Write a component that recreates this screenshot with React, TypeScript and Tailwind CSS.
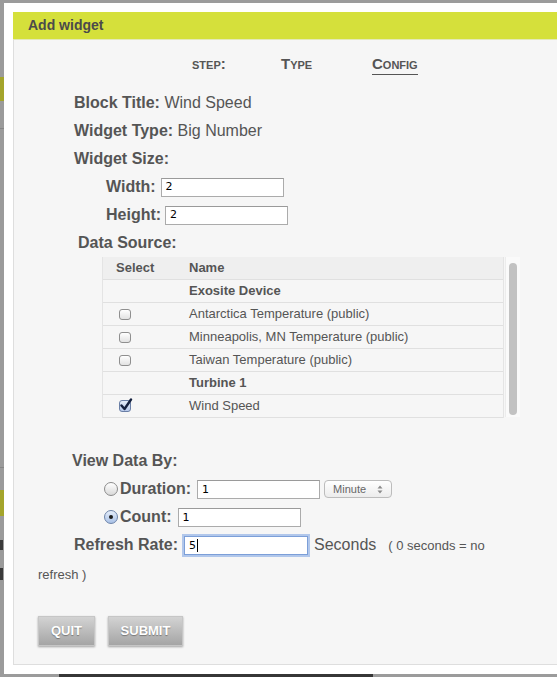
import React from 'react';

// Add-widget modal, config step

function Field({ w, value, focus }: { w: string; value: string; focus?: boolean }) {
  return (
    <div
      className={`${w} inline-flex items-center align-middle bg-white pl-[4px] font-['DejaVu_Sans',sans-serif] text-[11px] text-black ${
        focus
          ? 'h-[19px] border border-[#7c9fd8] shadow-[0_0_0_2px_rgba(120,160,225,0.55)]'
          : 'h-[19px] border border-[#ababab] border-t-[#9a9a9a]'
      }`}
    >
      {value}
      {focus && <span className="ml-px w-px h-[13px] bg-black" />}
    </div>
  );
}

function Check({ on }: { on?: boolean }) {
  if (on) {
    return (
      <span className="relative block w-[12px] h-[12px] rounded-[3px] border border-[#6a7fa6] bg-gradient-to-b from-[#e4ecf9] to-[#b7c9ea]">
        <svg viewBox="0 0 14 14" className="absolute -left-[1px] -top-[3px] w-[14px] h-[14px]">
          <path d="M2.5 7.5 L5.5 11 L12 1.5" fill="none" stroke="#15213f" strokeWidth="2.4" strokeLinecap="round" strokeLinejoin="round" />
        </svg>
      </span>
    );
  }
  return <span className="block w-[12px] h-[11px] rounded-[3px] border border-[#8f8f8f] bg-gradient-to-b from-white to-[#e2e2e2]" />;
}

function Radio({ on }: { on?: boolean }) {
  if (on) {
    return (
      <span className="flex items-center justify-center w-[14px] h-[14px] rounded-full border border-[#6d84a9] bg-gradient-to-b from-[#e6eefa] to-[#a9c1e6]">
        <span className="w-[4px] h-[4px] rounded-full bg-[#1c1c1c]" />
      </span>
    );
  }
  return <span className="block w-[14px] h-[14px] rounded-full border border-[#8c8c8c] bg-gradient-to-b from-white to-[#d9d9d9]" />;
}

const sources = [
  { group: 'Exosite Device' },
  { name: 'Antarctica Temperature (public)' },
  { name: 'Minneapolis, MN Temperature (public)' },
  { name: 'Taiwan Temperature (public)' },
  { group: 'Turbine 1' },
  { name: 'Wind Speed', on: true },
];

function Button({ children, w }: { children: React.ReactNode; w: string }) {
  return (
    <div
      className={`${w} h-[30px] flex items-center justify-center border border-[#c6c6c6] bg-gradient-to-b from-[#d3d3d3] to-[#a5a5a5] shadow-[0_1px_2px_rgba(0,0,0,0.35)] text-white font-bold text-[13px] [text-shadow:0_1px_1px_rgba(0,0,0,0.35)]`}
    >
      {children}
    </div>
  );
}

export default function App() {
  return (
    <div className="relative w-[557px] h-[677px] overflow-hidden bg-[#9b9b9b] font-['Liberation_Sans',Arial,sans-serif] text-[#555]">
      {/* page showing behind the modal */}
      <div className="absolute left-0 top-[77px] w-[4px] h-[24px] bg-[#a4a52c]" />
      <div className="absolute left-0 top-[128px] w-[4px] h-px bg-[#868686]" />
      <div className="absolute left-0 top-[467px] w-[4px] h-px bg-[#868686]" />
      <div className="absolute left-0 top-[490px] w-[4px] h-[26px] bg-[#a4a52c]" />
      <div className="absolute left-0 top-[540px] w-[3px] h-[10px] bg-[#3a3a3a]" />
      <div className="absolute left-0 top-[568px] w-[3px] h-[12px] bg-[#3a3a3a]" />
      <div className="absolute left-[59px] top-[674px] w-[314px] h-[3px] bg-[#363636]" />

      {/* modal */}
      <div className="absolute left-[4px] top-[3px] w-[580px] h-[671px] bg-white p-[9px]">
        <div className="h-[28px] flex items-center pl-[15px] bg-[#d5e03b] border-b border-[#e4e9b8] text-[14px] font-bold text-[#4b4b4b]">
          Add widget
        </div>

        <div className="h-[625px] bg-[#f6f6f6] border border-t-0 border-[#dedede] pt-[14px]">
          {/* steps */}
          <div className="flex pl-[178px] h-[21px] font-bold text-[15px] [font-variant:small-caps] leading-[20px]">
            <span className="w-[89px]">step:</span>
            <span className="w-[91px]">Type</span>
            <span className="border-b border-[#555]">Config</span>
          </div>

          <div className="mt-[14px] text-[16px]">
            <div className="h-[28px] flex items-center pl-[60px]">
              <b>Block Title:</b>&nbsp;Wind Speed
            </div>
            <div className="h-[28px] flex items-center pl-[60px]">
              <b>Widget Type:</b>&nbsp;Big Number
            </div>
            <div className="h-[28px] flex items-center pl-[60px]">
              <b>Widget Size:</b>
            </div>
            <div className="h-[28px] flex items-center pl-[92px] gap-[5px]">
              <b>Width:</b>
              <Field w="w-[123px]" value="2" />
            </div>
            <div className="h-[28px] flex items-center pl-[92px] gap-[4px]">
              <b>Height:</b>
              <Field w="w-[123px]" value="2" />
            </div>
            <div className="h-[28px] flex items-center pl-[64px]">
              <b>Data Source:</b>
            </div>
          </div>

          {/* data source table */}
          <div className="ml-[88px] w-[418px] h-[161px] flex text-[13px]">
            <div className="w-[402px] border-x border-[#e4e4e4]">
              <div className="h-[23px] flex items-center bg-[#efefef] border-b border-[#e0e0e0] font-bold">
                <span className="w-[86px] pl-[13px]">Select</span>
                <span>Name</span>
              </div>
              {sources.map((s, i) => (
                <div key={i} className="h-[23px] flex items-center border-b border-[#e0e0e0]">
                  <span className="w-[86px] pl-[16px]">{s.name && <Check on={s.on} />}</span>
                  {s.group ? <b>{s.group}</b> : <span>{s.name}</span>}
                </div>
              ))}
            </div>
            <div className="ml-px w-[15px] h-[160px] bg-[#fafafa] border-l border-[#ececec] pt-[6px] pl-[3px]">
              <div className="w-[8px] h-[152px] rounded-full bg-[#c2c2c2]" />
            </div>
          </div>

          <div className="mt-[29px] text-[16px]">
            <div className="h-[28px] flex items-center pl-[58px] font-bold">View Data By:</div>
            <div className="h-[28px] flex items-center pl-[90px]">
              <Radio />
              <b className="ml-[2px]">Duration:</b>
              <span className="ml-[6px]">
                <Field w="w-[123px]" value="1" />
              </span>
              <div className="ml-[4px] w-[68px] h-[18px] flex items-center justify-between pl-[8px] pr-[8px] rounded-[4px] border border-[#bcbcbc] bg-gradient-to-b from-white to-[#ececec] text-[11px] text-[#666]">
                Minute
                <svg viewBox="0 0 6 9" className="w-[6px] h-[9px]">
                  <path d="M3 0.5 L5.5 3.5 H0.5 Z M3 8.5 L5.5 5.5 H0.5 Z" fill="#8a8a8a" />
                </svg>
              </div>
            </div>
            <div className="h-[28px] flex items-center pl-[90px]">
              <Radio on />
              <b className="ml-[2px]">Count:</b>
              <span className="ml-[6px]">
                <Field w="w-[123px]" value="1" />
              </span>
            </div>
            <p className="w-[500px] pl-[24px] leading-[28px]">
              <b className="ml-[36px]">Refresh Rate:</b>
              <span className="ml-[6px]">
                <Field w="w-[124px]" value="5" focus />
              </span>
              <span className="ml-[6px]">Seconds</span>
              <span className="ml-[12px] text-[13px]">( 0 seconds = no</span>
              <br />
              <span className="text-[13px]">refresh )</span>
            </p>
          </div>

          <div className="mt-[27px] pl-[24px] flex gap-[13px]">
            <Button w="w-[57px]">QUIT</Button>
            <Button w="w-[75px]">SUBMIT</Button>
          </div>
        </div>
      </div>
    </div>
  );
}
